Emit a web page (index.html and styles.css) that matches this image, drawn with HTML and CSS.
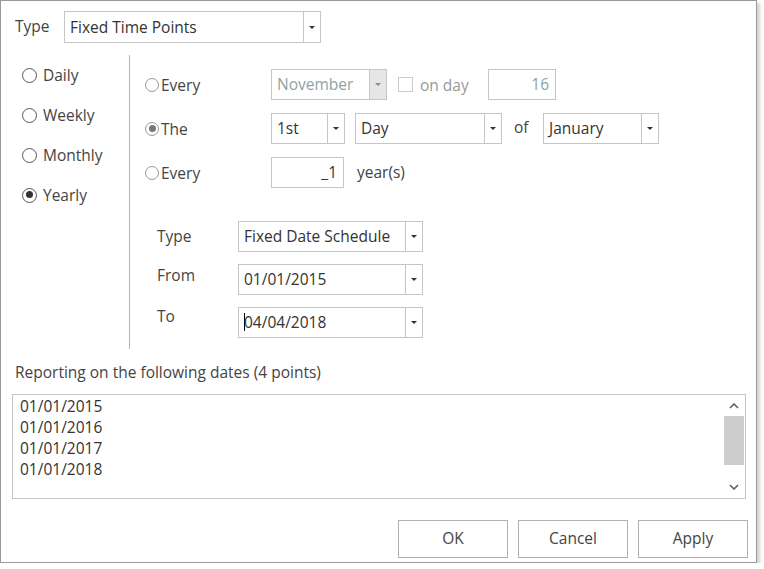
FILE: index.html
```html
<!DOCTYPE html>
<html lang="en">
<head>
    <meta charset="UTF-8">
    <title>Reporting Schedule</title>
    <link rel="stylesheet" href="styles.css">
</head>
<body>
    <div class="dialog">
        <div class="top-row">
            <span class="top-label">Type</span>
            <div class="combo combo-type">
                <span class="combo-text">Fixed Time Points</span>
                <span class="combo-btn"><i class="caret"></i></span>
            </div>
        </div>

        <div class="main">
            <div class="freq-list">
                <label class="freq"><span class="radio"></span>Daily</label>
                <label class="freq"><span class="radio"></span>Weekly</label>
                <label class="freq"><span class="radio"></span>Monthly</label>
                <label class="freq"><span class="radio checked"></span>Yearly</label>
            </div>

            <div class="detail">
                <div class="row">
                    <label class="row-label"><span class="radio small"></span>Every</label>
                    <div class="combo combo-month disabled">
                        <span class="combo-text">November</span>
                        <span class="combo-btn"><i class="caret"></i></span>
                    </div>
                    <label class="on-day"><span class="checkbox"></span>on day</label>
                    <div class="field field-day disabled">16</div>
                </div>

                <div class="row">
                    <label class="row-label"><span class="radio small checked"></span>The</label>
                    <div class="combo combo-nth">
                        <span class="combo-text">1st</span>
                        <span class="combo-btn"><i class="caret"></i></span>
                    </div>
                    <div class="combo combo-day">
                        <span class="combo-text">Day</span>
                        <span class="combo-btn"><i class="caret"></i></span>
                    </div>
                    <span class="of-label">of</span>
                    <div class="combo combo-month">
                        <span class="combo-text">January</span>
                        <span class="combo-btn"><i class="caret"></i></span>
                    </div>
                </div>

                <div class="row">
                    <label class="row-label"><span class="radio small"></span>Every</label>
                    <div class="field field-years">_1</div>
                    <span class="years-label">year(s)</span>
                </div>

                <div class="range">
                    <div class="range-row">
                        <span class="range-label label-type">Type</span>
                        <div class="combo combo-range">
                            <span class="combo-text">Fixed Date Schedule</span>
                            <span class="combo-btn"><i class="caret"></i></span>
                        </div>
                    </div>
                    <div class="range-row">
                        <span class="range-label label-from">From</span>
                        <div class="combo combo-range">
                            <span class="combo-text">01/01/2015</span>
                            <span class="combo-btn"><i class="caret"></i></span>
                        </div>
                    </div>
                    <div class="range-row">
                        <span class="range-label label-to">To</span>
                        <div class="combo combo-range">
                            <span class="combo-text"><span class="cursor"></span>04/04/2018</span>
                            <span class="combo-btn"><i class="caret"></i></span>
                        </div>
                    </div>
                </div>
            </div>
        </div>

        <div class="dates-label">Reporting on the following dates (4 points)</div>
        <div class="dates-list">
            <div class="dates-items">
                <div>01/01/2015</div>
                <div>01/01/2016</div>
                <div>01/01/2017</div>
                <div>01/01/2018</div>
            </div>
            <div class="scrollbar">
                <span class="scroll-arrow">
                    <svg width="10" height="6" viewBox="0 0 10 6"><path d="M1 5 L5 1 L9 5" fill="none" stroke="#606060" stroke-width="1.6"/></svg>
                </span>
                <span class="scroll-thumb"></span>
                <span class="scroll-track"></span>
                <span class="scroll-arrow">
                    <svg width="10" height="6" viewBox="0 0 10 6"><path d="M1 1 L5 5 L9 1" fill="none" stroke="#606060" stroke-width="1.6"/></svg>
                </span>
            </div>
        </div>

        <div class="buttons">
            <button>OK</button>
            <button>Cancel</button>
            <button>Apply</button>
        </div>
    </div>
</body>
</html>
```

FILE: styles.css
```css
body {
    margin: 0;
    background-color: white;
    font-family: "Open Sans", "Noto Sans", sans-serif;
    font-size: 15.5px;
    color: #444;
}
.dialog {
    box-sizing: border-box;
    width: 757px;
    height: 563px;
    border: 1px solid #9a9a9a;
    background-color: white;
    box-shadow: 3px 3px 3px rgba(0,0,0,0.18);
}

/* combo boxes */
.combo {
    box-sizing: border-box;
    display: flex;
    height: 31px;
    border: 1px solid #c6c6c6;
    background-color: white;
    color: #333;
}
.combo-text {
    flex: 1;
    display: flex;
    align-items: center;
    padding-left: 5px;
    padding-bottom: 1px;
    white-space: nowrap;
    overflow: hidden;
}
.combo-btn {
    width: 16px;
    border-left: 1px solid #c6c6c6;
    display: flex;
    align-items: center;
    justify-content: center;
}
.caret {
    width: 0;
    height: 0;
    border-left: 3px solid transparent;
    border-right: 3px solid transparent;
    border-top: 3px solid #333;
}
.combo.disabled {
    color: #8fa3a3;
}
.combo.disabled .combo-btn {
    background-color: #e6e6e6;
}
.combo.disabled .caret {
    border-top-color: #888;
}
.cursor {
    display: inline-block;
    width: 1px;
    height: 18px;
    margin-right: -1px;
    background-color: #000;
}

/* text fields */
.field {
    box-sizing: border-box;
    height: 31px;
    border: 1px solid #c6c6c6;
    padding-right: 6px;
    padding-bottom: 1px;
    display: flex;
    align-items: center;
    justify-content: flex-end;
    color: #333;
}
.field.disabled {
    color: #8fa3a3;
}

/* radios */
.radio {
    box-sizing: border-box;
    display: inline-block;
    flex-shrink: 0;
    width: 15px;
    height: 15px;
    border: 1.5px solid #555;
    border-radius: 50%;
    margin-right: 6px;
    position: relative;
}
.radio.checked::after {
    content: "";
    position: absolute;
    left: 2.5px;
    top: 2.5px;
    width: 7px;
    height: 7px;
    border-radius: 50%;
    background-color: #333;
}
.radio.small {
    width: 14px;
    height: 14px;
    border: 1px solid #999;
    margin-right: 2px;
}
.radio.small.checked::after {
    left: 2.5px;
    top: 2.5px;
    width: 7px;
    height: 7px;
    background-color: #777;
}
.checkbox {
    box-sizing: border-box;
    display: inline-block;
    width: 15px;
    height: 15px;
    border: 1px solid #ccc;
    margin-right: 7px;
}

/* header */
.top-row {
    display: flex;
    align-items: center;
    margin-top: 10px;
    padding-left: 14px;
}
.top-label {
    width: 49px;
    margin-top: -3px;
}
.combo-type {
    width: 257px;
    height: 32px;
}

/* main area */
.main {
    display: flex;
    margin-top: 15px;
    height: 291px;
}
.freq-list {
    box-sizing: border-box;
    width: 129px;
    border-right: 1px solid #b4b4b4;
    padding-left: 21px;
    margin-top: -3px;
}
.freq {
    display: flex;
    align-items: center;
    height: 40px;
}
.detail {
    padding-left: 15px;
    padding-top: 11px;
}
.row {
    display: flex;
    align-items: center;
    height: 31px;
    margin-bottom: 13px;
}
.row-label {
    display: flex;
    align-items: center;
    width: 126px;
}
.combo-month {
    width: 116px;
}
.on-day {
    display: flex;
    align-items: center;
    width: 90px;
    margin-left: 11px;
    color: #999;
}
.field-day {
    width: 68px;
}
.combo-nth {
    width: 74px;
}
.combo-day {
    width: 147px;
    margin-left: 10px;
}
.of-label {
    width: 29px;
    padding-left: 12px;
    margin-top: -4px;
}
.field-years {
    width: 73px;
}
.years-label {
    margin-left: 13px;
    margin-top: -2px;
}

/* date range */
.range {
    margin-top: -13px;
    padding-top: 33px;
    padding-left: 12px;
}
.range-row {
    display: flex;
    align-items: center;
    margin-bottom: 12px;
}
.range-label {
    width: 81px;
}
.label-type {
    margin-top: -2px;
}
.label-from {
    margin-top: -10px;
}
.label-to {
    margin-top: -13px;
}
.combo-range {
    width: 185px;
}

/* dates list */
.dates-label {
    margin-top: 13px;
    margin-left: 14px;
    height: 20px;
    line-height: 20px;
}
.dates-list {
    box-sizing: border-box;
    display: flex;
    width: 734px;
    height: 105px;
    margin-top: 12px;
    margin-left: 11px;
    border: 1px solid #c6c6c6;
    color: #333;
}
.dates-items {
    flex: 1;
    padding-top: 1px;
    padding-left: 7px;
    line-height: 21px;
}
.scrollbar {
    width: 20px;
    margin: 1px 1px 1px 0;
    display: flex;
    flex-direction: column;
}
.scroll-arrow {
    height: 20px;
    display: flex;
    align-items: center;
    justify-content: center;
}
.scroll-thumb {
    height: 49px;
    background-color: #cdcdcd;
}
.scroll-track {
    flex: 1;
}

/* buttons */
.buttons {
    display: flex;
    justify-content: flex-end;
    gap: 10px;
    margin-top: 21px;
    padding-right: 8px;
}
button {
    box-sizing: border-box;
    width: 110px;
    height: 38px;
    padding-bottom: 3px;
    border: 1px solid #b0b0b0;
    background-color: white;
    font-family: inherit;
    font-size: 15.5px;
    color: #444;
}
```
